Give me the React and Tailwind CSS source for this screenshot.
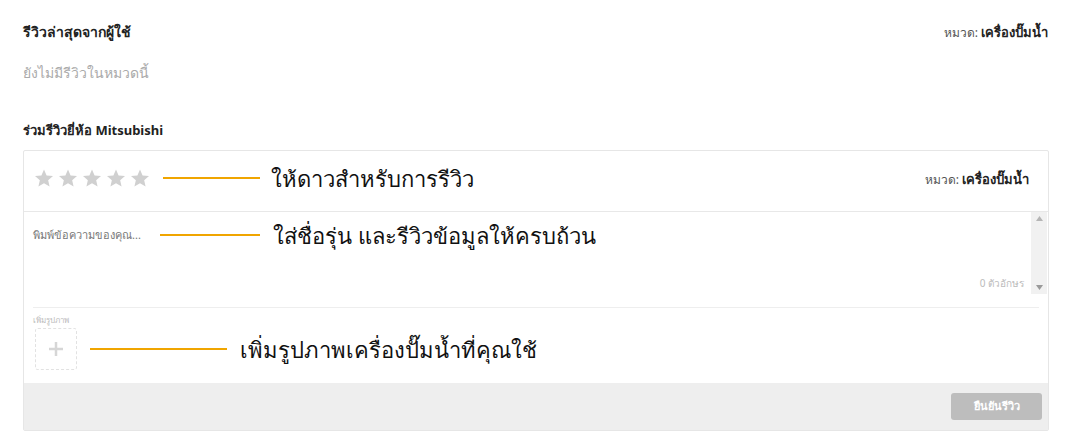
import React, { useState } from "react";

const FONT = { fontFamily: '"Noto Sans", "Liberation Sans", sans-serif' };

function Star() {
  return (
    <svg width="20" height="20" viewBox="0 0 24 24" className="fill-[#d0d0d0]">
      <path d="M12 1.8l3.1 7.1 7.7.7-5.8 5.1 1.7 7.6L12 18.3l-6.7 4 1.7-7.6L1.2 9.6l7.7-.7z" />
    </svg>
  );
}

function Callout({ line, children, textClass = "" }) {
  return (
    <div className="flex items-center">
      <div className={`h-[2px] bg-[#f0a500] ${line}`} />
      <span className={`text-[22px] text-[#111] leading-none ${textClass}`}>{children}</span>
    </div>
  );
}

export default function App() {
  const [text, setText] = useState("");

  return (
    <div className="w-[1067px] h-[441px] bg-white overflow-hidden" style={FONT}>
      <div className="pl-[23px] pr-[19px]">
        {/* HEADER */}
        <div className="flex items-start justify-between pt-[22px]">
          <h2 className="text-[14px] font-bold text-[#222] leading-5">รีวิวล่าสุดจากผู้ใช้</h2>
          <div className="text-[12px] text-[#555] leading-5">
            หมวด: <span className="text-[13px] font-bold text-[#222]">เครื่องปั๊มน้ำ</span>
          </div>
        </div>
        <p className="mt-[20px] text-[14px] text-[#aaa] leading-5">ยังไม่มีรีวิวในหมวดนี้</p>

        <h3 className="mt-[37px] text-[13px] font-bold text-[#222] leading-5">ร่วมรีวิวยี่ห้อ Mitsubishi</h3>

        {/* FORM CARD */}
        <div className="mt-[10px] border border-[#e6e6e6] rounded-[2px] w-[1026px]">
          {/* STARS */}
          <div className="h-[61px] flex items-center justify-between pl-[10px] pr-[19px] border-b border-[#e8e8e8]">
            <div className="flex items-center pb-[6px]">
              <div className="flex gap-[4px]">
                {[0, 1, 2, 3, 4].map((i) => (
                  <Star key={i} />
                ))}
              </div>
              <div className="ml-[13px]">
                <Callout line="w-[97px] mr-[11px]">ให้ดาวสำหรับการรีวิว</Callout>
              </div>
            </div>
            <div className="text-[12px] text-[#555] pb-[2px]">
              หมวด: <span className="text-[13px] font-bold text-[#222]">เครื่องปั๊มน้ำ</span>
            </div>
          </div>

          {/* TEXTAREA */}
          <div className="relative h-[82px] flex">
            <div className="flex-1 relative">
              <textarea
                value={text}
                onChange={(e) => setText(e.target.value)}
                className="absolute inset-0 w-full h-full resize-none outline-none bg-transparent"
              />
              <div className="pointer-events-none pl-[9px] pt-[12px] flex items-center">
                <span className="w-[122px] text-[11px] text-[#777] leading-4 whitespace-nowrap">
                  พิมพ์ข้อความของคุณ...
                </span>
                <div className="ml-[5px]">
                  <Callout line="w-[100px] mr-[13px]">ใส่ชื่อรุ่น และรีวิวข้อมูลให้ครบถ้วน</Callout>
                </div>
              </div>
              <span className="absolute right-[7px] bottom-[3px] text-[10px] text-[#bbb]">
                {text.length} ตัวอักษร
              </span>
            </div>
            <div className="w-[16px] mr-[1px] bg-[#f1f1f1] flex flex-col items-center justify-between py-[4px]">
              <svg width="7" height="5" viewBox="0 0 7 5" className="fill-[#b5b5b5]">
                <path d="M3.5 0L7 5H0z" />
              </svg>
              <svg width="7" height="5" viewBox="0 0 7 5" className="fill-[#9a9a9a]">
                <path d="M0 0h7L3.5 5z" />
              </svg>
            </div>
          </div>

          {/* IMAGE */}
          <div className="mx-[9px] mt-[13px] border-t border-[#eeeeee] pt-[6px] pb-[13px]">
            <div className="text-[8px] text-[#bbb] leading-3">เพิ่มรูปภาพ</div>
            <div className="flex items-center mt-[2px]">
              <div className="w-[42px] h-[42px] ml-[2px] border border-dashed border-[#e2e2e2] rounded-[3px] flex items-center justify-center">
                <svg width="14" height="14" viewBox="0 0 14 14" className="stroke-[#d6d6d6]" strokeWidth="2.5">
                  <path d="M7 0v14M0 7h14" />
                </svg>
              </div>
              <div className="ml-[13px]">
                <Callout line="w-[137px] mr-[13px]">เพิ่มรูปภาพเครื่องปั๊มน้ำที่คุณใช้</Callout>
              </div>
            </div>
          </div>

          {/* FOOTER */}
          <div className="h-[47px] bg-[#eeeeee] flex items-center justify-end pr-[6px]">
            <button className="w-[91px] h-[27px] rounded-[3px] bg-[#bdbdbd] text-white text-[11px] font-bold">
              ยืนยันรีวิว
            </button>
          </div>
        </div>
      </div>
    </div>
  );
}
